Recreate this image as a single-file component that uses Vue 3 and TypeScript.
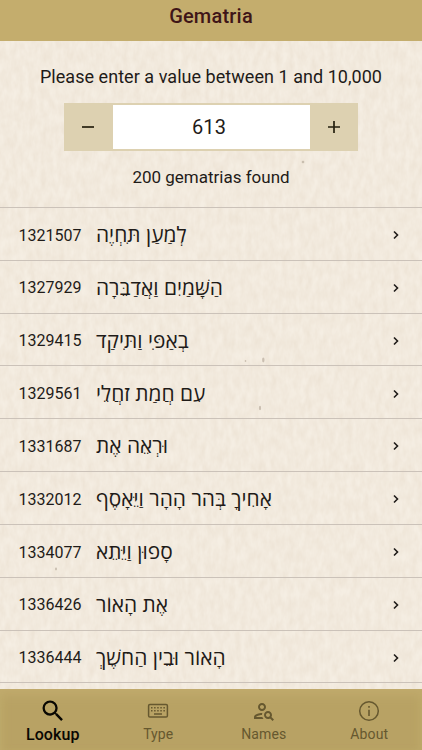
<script setup lang="ts">
import { ref } from 'vue'

interface Entry {
  id: number
  phrase: string
}

const value = ref<number>(613)
const active = ref<string>('Lookup')
const tabs: string[] = ['Lookup', 'Type', 'Names', 'About']

const entries: Entry[] = [
  { id: 1321507, phrase: 'לְמַעַן תִּחְיֶה' },
  { id: 1327929, phrase: 'הַשָּׁמַיִם וַאֲדַבֵּרָה' },
  { id: 1329415, phrase: 'בְאַפִּי וַתִּיקַד' },
  { id: 1329561, phrase: 'עִם חֲמַת זֹחֲלֵי' },
  { id: 1331687, phrase: 'וּרְאֵה אֶת' },
  { id: 1332012, phrase: 'אָחִיךָ בְּהֹר הָהָר וַיֵּאָסֶף' },
  { id: 1334077, phrase: 'סָפוּן וַיֵּתֵא' },
  { id: 1336426, phrase: 'אֶת הָאוֹר' },
  { id: 1336444, phrase: 'הָאוֹר וּבֵין הַחֹשֶׁךְ' },
]

function step(by: number): void {
  value.value = Math.min(10000, Math.max(1, value.value + by))
}
</script>

<template>
  <div class="app">
    <svg class="paper" width="422" height="750" aria-hidden="true">
      <filter id="grain" x="0" y="0" width="100%" height="100%" color-interpolation-filters="sRGB">
        <feTurbulence type="fractalNoise" baseFrequency="0.17 0.08" numOctaves="3" seed="8" />
        <feColorMatrix values="0 0 0 0 0.82  0 0 0 0 0.74  0 0 0 0 0.64  0.3 0 0 0 -0.06" />
      </filter>
      <rect width="422" height="750" filter="url(#grain)" />
      <g fill="#aa9c8d" opacity=".55">
        <ellipse cx="263.3" cy="360" rx="1.2" ry="2.4" />
        <ellipse cx="245.5" cy="361" rx=".8" ry="1" />
        <ellipse cx="260" cy="408" rx="1.1" ry="2.2" />
        <ellipse cx="56" cy="569" rx="1" ry="1.4" />
        <ellipse cx="303" cy="162" rx="1.3" ry="1.3" />
      </g>
    </svg>

    <header class="bar">Gematria</header>

    <main class="content">
      <section class="search">
        <p class="prompt">Please enter a value between 1 and 10,000</p>
        <div class="stepper">
          <button class="step" aria-label="Decrease" @click="step(-1)">
            <svg width="14" height="14" viewBox="0 0 14 14"><path d="M1 7h12" /></svg>
          </button>
          <div class="value">{{ value }}</div>
          <button class="step" aria-label="Increase" @click="step(1)">
            <svg width="14" height="14" viewBox="0 0 14 14"><path d="M1 7h12M7 1v12" /></svg>
          </button>
        </div>
        <p class="found">200 gematrias found</p>
      </section>

      <ul class="list">
        <li v-for="entry in entries" :key="entry.id" class="row">
          <span class="num">{{ entry.id }}</span>
          <span class="phrase" dir="rtl" lang="he">{{ entry.phrase }}</span>
          <svg class="chevron" width="8" height="10" viewBox="0 0 8 10"><path d="M2 1.5 5.5 5 2 8.5" /></svg>
        </li>
      </ul>
    </main>

    <nav class="tabs">
      <button
        v-for="tab in tabs"
        :key="tab"
        class="tab"
        :class="{ active: tab === active }"
        @click="active = tab"
      >
        <span class="icon">
          <svg v-if="tab === 'Lookup'" width="28" height="28" viewBox="0 0 24 24">
            <path d="M15.5 14h-.79l-.28-.27A6.471 6.471 0 0 0 16 9.5 6.5 6.5 0 1 0 9.5 16c1.61 0 3.09-.59 4.23-1.57l.27.28v.79l5 4.99L20.49 19l-4.99-5zm-6 0C7.01 14 5 11.99 5 9.5S7.01 5 9.5 5 14 7.01 14 9.5 11.99 14 9.5 14z" />
          </svg>
          <svg v-else-if="tab === 'Type'" width="24" height="24" viewBox="0 0 24 24">
            <rect class="outline" x="2.6" y="5.5" width="18.8" height="12.6" rx="1.3" />
            <path d="M5 8h1.500v1.500H5zm3.100 0h1.500v1.500H8.100zm3.100 0h1.500v1.500h-1.500zm3.100 0h1.500v1.500h-1.500zm3.100 0h1.500v1.500h-1.500zM5 11h1.500v1.500H5zm3.100 0h1.500v1.500H8.100zm3.100 0h1.500v1.500h-1.500zm3.100 0h1.500v1.500h-1.500zm3.100 0h1.500v1.500h-1.500zM8 14.200h8v1.600H8z" />
          </svg>
          <svg v-else-if="tab === 'Names'" width="24" height="24" viewBox="0 0 24 24">
            <path d="M10 12c2.21 0 4-1.79 4-4s-1.79-4-4-4-4 1.79-4 4 1.79 4 4 4zm0-6c1.1 0 2 .9 2 2s-.9 2-2 2-2-.9-2-2 .9-2 2-2zM4 18c.22-.72 3.31-2 6-2 0-.7.13-1.37.35-1.99C7.62 13.91 2 15.27 2 18v2h9.54c-.52-.58-.93-1.25-1.19-2H4zM19.43 18.02c.36-.59.57-1.28.57-2.02 0-2.21-1.79-4-4-4s-4 1.79-4 4 1.79 4 4 4c.74 0 1.43-.22 2.02-.57L20.59 22 22 20.59l-2.57-2.57zM16 18c-1.1 0-2-.9-2-2s.9-2 2-2 2 .9 2 2-.9 2-2 2z" />
          </svg>
          <svg v-else width="24" height="24" viewBox="0 0 24 24">
            <circle class="outline" cx="12" cy="12" r="9.3" />
            <path d="M11.200 7h1.600v1.800h-1.600zm0 3.700h1.600v6.300h-1.600z" />
          </svg>
        </span>
        <span class="label">{{ tab }}</span>
      </button>
    </nav>
  </div>
</template>

<style>
body {
  margin: 0;
  background: #f3ebdf;
}
</style>

<style scoped>
.app {
  position: relative;
  display: flex;
  flex-direction: column;
  width: 422px;
  height: 750px;
  overflow: hidden;
  background: #f5eee3;
  color: #1f1b18;
  font-family: Roboto, "Liberation Sans", sans-serif;
}
.paper {
  position: absolute;
  inset: 0;
}
button {
  margin: 0;
  padding: 0;
  border: 0;
  background: none;
  font: inherit;
  color: inherit;
}
.bar {
  position: relative;
  box-sizing: border-box;
  flex: none;
  height: 41px;
  padding-top: 3.500px;
  background: #c4ad6d;
  color: #3f1518;
  font-size: 20px;
  font-weight: 500;
  letter-spacing: .2px;
  line-height: 24px;
  text-align: center;
}
.content {
  position: relative;
  flex: 1;
  min-height: 0;
  overflow: hidden;
}
.search {
  display: flex;
  flex-direction: column;
  align-items: center;
  box-sizing: border-box;
  height: 166px;
  padding-top: 24.500px;
}
.prompt,
.found {
  margin: 0;
  font-size: 18px;
  line-height: 22px;
  white-space: nowrap;
}
.prompt {
  letter-spacing: .04px;
}
.found {
  margin-top: 14.500px;
  font-size: 17px;
}
.stepper {
  display: flex;
  width: 294px;
  height: 48px;
  margin-top: 15.500px;
  background: #ddd1b1;
}
.step {
  display: flex;
  flex: 1;
  align-items: center;
  justify-content: center;
}
.step path {
  fill: none;
  stroke: #25200f;
  stroke-width: 1.7;
}
.value {
  width: 197px;
  margin: 2px 0;
  background: #fff;
  font-size: 20px;
  line-height: 44px;
  text-align: center;
  letter-spacing: .1px;
  text-indent: -4px;
}
.list {
  margin: 0;
  padding: 0;
  list-style: none;
  border-top: 1px solid #cbc2b9;
}
.row {
  display: flex;
  align-items: center;
  box-sizing: border-box;
  height: 52.83px;
  padding: 2.500px 22px 0 18.500px;
  border-bottom: 1px solid #cbc2b9;
}
.num {
  width: 77.5px;
  font-size: 16px;
}
.phrase {
  margin-top: -2px;
  font-family: "Open Sans", "Noto Sans", "DejaVu Sans", sans-serif;
  font-size: 20.900px;
  line-height: 28px;
  white-space: nowrap;
}
.chevron {
  margin: 0 0 0 auto;
}
.chevron path {
  fill: none;
  stroke: #1f1b18;
  stroke-width: 1.6;
}
.tabs {
  position: relative;
  display: flex;
  flex: none;
  height: 61px;
  background: #b8a264;
  box-shadow: inset 0 12px 12px -6px #c1ab6d, inset 6px 0 8px -4px #beaa6b, inset -6px 0 8px -4px #beaa6b;
}
.tab {
  display: flex;
  flex: 1;
  flex-direction: column;
  align-items: center;
  color: #66582f;
  font-size: 14px;
  line-height: 18px;
}
.icon {
  display: flex;
  align-items: center;
  justify-content: center;
  height: 28px;
  margin-top: 8px;
}
.icon svg {
  fill: currentColor;
}
.icon .outline {
  fill: none;
  stroke: currentColor;
  stroke-width: 1.5;
}
.label {
  letter-spacing: .1px;
}
.active {
  color: #090702;
  font-size: 16px;
  font-weight: 500;
}
.active .label {
  margin-top: 1px;
}
</style>
